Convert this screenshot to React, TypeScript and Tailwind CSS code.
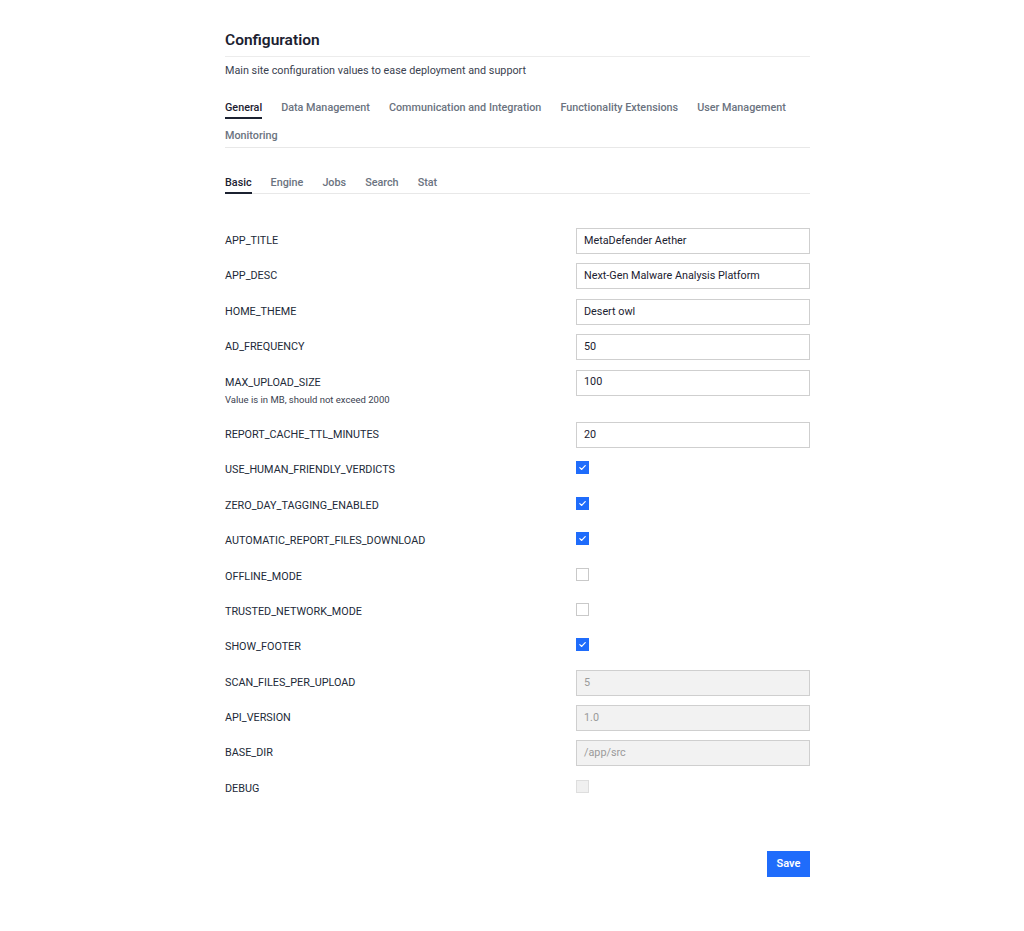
import React from 'react';

type Row =
  | { key: string; kind: 'text'; value: string; hint?: string; disabled?: boolean }
  | { key: string; kind: 'check'; checked: boolean; disabled?: boolean };

const rows: Row[] = [
  { key: 'APP_TITLE', kind: 'text', value: 'MetaDefender Aether' },
  { key: 'APP_DESC', kind: 'text', value: 'Next-Gen Malware Analysis Platform' },
  { key: 'HOME_THEME', kind: 'text', value: 'Desert owl' },
  { key: 'AD_FREQUENCY', kind: 'text', value: '50' },
  { key: 'MAX_UPLOAD_SIZE', kind: 'text', value: '100', hint: 'Value is in MB, should not exceed 2000' },
  { key: 'REPORT_CACHE_TTL_MINUTES', kind: 'text', value: '20' },
  { key: 'USE_HUMAN_FRIENDLY_VERDICTS', kind: 'check', checked: true },
  { key: 'ZERO_DAY_TAGGING_ENABLED', kind: 'check', checked: true },
  { key: 'AUTOMATIC_REPORT_FILES_DOWNLOAD', kind: 'check', checked: true },
  { key: 'OFFLINE_MODE', kind: 'check', checked: false },
  { key: 'TRUSTED_NETWORK_MODE', kind: 'check', checked: false },
  { key: 'SHOW_FOOTER', kind: 'check', checked: true },
  { key: 'SCAN_FILES_PER_UPLOAD', kind: 'text', value: '5', disabled: true },
  { key: 'API_VERSION', kind: 'text', value: '1.0', disabled: true },
  { key: 'BASE_DIR', kind: 'text', value: '/app/src', disabled: true },
  { key: 'DEBUG', kind: 'check', checked: false, disabled: true },
];

const mainTabs = ['General', 'Data Management', 'Communication and Integration', 'Functionality Extensions', 'User Management', 'Monitoring'];
const subTabs = ['Basic', 'Engine', 'Jobs', 'Search', 'Stat'];

const Check: React.FC<{ checked: boolean; disabled?: boolean }> = ({ checked, disabled }) => {
  if (checked) {
    return (
      <span className="mt-[4px] flex h-[13px] w-[13px] items-center justify-center bg-[#1f6cfb]">
        <svg width="9" height="9" viewBox="0 0 10 10" fill="none">
          <path d="M2 5.2 L4.1 7.2 L8 2.8" stroke="white" strokeWidth="1.3" strokeLinecap="round" strokeLinejoin="round" />
        </svg>
      </span>
    );
  }
  return (
    <span
      className={
        disabled
          ? 'mt-[4px] block h-[13px] w-[13px] border border-[#dedede] bg-[#f0f0f0]'
          : 'mt-[4px] block h-[13px] w-[13px] border border-[#c9c9c9] bg-white'
      }
    />
  );
};

export default function App() {
  return (
    <div className="min-h-[931px] bg-white font-['Roboto','Liberation_Sans',sans-serif] text-[#222a38]">
      <div className="ml-[225px] w-[585px] pt-[28px]">
        {/* Header */}
        <h1 className="border-b border-[#ececec] pb-[4px] text-[15.5px] font-semibold leading-6 text-[#1b2130]">Configuration</h1>
        <p className="mt-[6px] text-[10.8px] leading-4 text-[#3a4250]">Main site configuration values to ease deployment and support</p>

        {/* Main tabs */}
        <div className="mt-[21px] flex flex-wrap gap-x-[19px] gap-y-[9px] border-b border-[#e8e8e8]">
          {mainTabs.map((t, i) => (
            <span
              key={t}
              className={
                i === 0
                  ? 'border-b-2 border-[#1b2130] pb-px text-[10.8px] font-medium leading-4 text-[#1b2130]'
                  : 'border-b-2 border-transparent pb-px text-[10.8px] font-medium leading-4 text-[#6b7380]'
              }
            >
              {t}
            </span>
          ))}
        </div>

        {/* Sub tabs */}
        <div className="mt-[27px] flex gap-x-[19px] border-b border-[#e8e8e8]">
          {subTabs.map((t, i) => (
            <span
              key={t}
              className={
                i === 0
                  ? '-mb-px border-b-2 border-[#1b2130] pb-px text-[10.8px] font-medium leading-4 text-[#1b2130]'
                  : '-mb-px border-b-2 border-transparent pb-px text-[10.8px] font-medium leading-4 text-[#6b7380]'
              }
            >
              {t}
            </span>
          ))}
        </div>

        {/* Settings rows */}
        <div className="mt-[34px] flex flex-col gap-y-[9.4px]">
          {rows.map((r) => (
            <div key={r.key} className="grid min-h-[26px] grid-cols-[351px_234px] items-start">
              <div className="pt-[5px]">
                <div className="text-[10.8px] leading-4 text-[#222a38]">{r.key}</div>
                {r.kind === 'text' && r.hint && (
                  <div className="mt-[3px] mb-[7px] text-[9.5px] leading-3 text-[#3a4250]">{r.hint}</div>
                )}
              </div>
              {r.kind === 'text' ? (
                <div
                  className={
                    r.disabled
                      ? 'flex h-[26px] items-center border border-[#cfcfcf] bg-[#f2f2f2] px-[7px] text-[10.8px] text-[#9a9a9a]'
                      : 'flex h-[26px] items-center border border-[#cfcfcf] bg-white px-[7px] text-[10.8px] text-[#1b2130]'
                  }
                >
                  {r.value}
                </div>
              ) : (
                <Check checked={r.checked} disabled={r.disabled} />
              )}
            </div>
          ))}
        </div>

        <div className="mt-[49px] flex justify-end">
          <button className="h-[26px] w-[43px] bg-[#1f6cfb] text-[11px] font-semibold text-white">Save</button>
        </div>
      </div>
    </div>
  );
}
